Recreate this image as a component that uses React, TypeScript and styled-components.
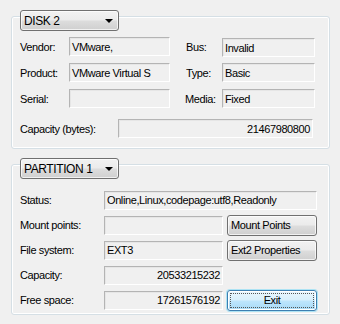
import styled, { createGlobalStyle } from 'styled-components';

const GlobalStyle = createGlobalStyle`
    html, body{
        margin : 0;
        padding : 0;
        background : #f0f0f0;
    }
    body{
        font-family : "Liberation Sans", Arial, sans-serif;
        font-size : 11px;
        letter-spacing : -0.4px;
        color : #000;
    }
`;

const Page = styled.div`
    width : 340px;
    height : 324px;
    box-sizing : border-box;
    padding : 10px 10px 0 11px;
    display : flex;
    flex-direction : column;
    gap : 9px;
`;

const Section = styled.div`
    display : flex;
    flex-direction : column;
`;

const Combo = styled.div`
    position : relative;
    z-index : 1;
    margin-left : 9px;
    width : 99px;
    height : 21px;
    box-sizing : border-box;
    border : 1px solid #707070;
    border-radius : 3px;
    background : linear-gradient(#f2f2f2 0%, #ebebeb 48%, #dddddd 52%, #cfcfcf 100%);
    box-shadow : inset 0 0 0 1px rgba(255,255,255,0.7);
    display : flex;
    align-items : center;
    justify-content : space-between;
    padding : 0 5px 0 3px;
    font-size : 12px;

    .arrow{
        width : 0;
        height : 0;
        border-left : 4px solid transparent;
        border-right : 4px solid transparent;
        border-top : 4px solid #000;
    }
`;

const Group = styled.div<{ $top: number; $bottom: number }>`
    margin-top : -15px;
    width : 319px;
    box-sizing : border-box;
    border : 1px solid #d5dfe5;
    border-radius : 3px;
    box-shadow : inset 0 0 0 1px #fff;
    padding : ${p => p.$top}px 8px ${p => p.$bottom}px 8px;
`;

const DiskGrid = styled.div`
    display : grid;
    grid-template-columns : 49px 101px 52px 93px;
    grid-template-rows : 19px 19px 19px;
    row-gap : 7px;
    align-items : center;
`;

const PartGrid = styled.div`
    display : grid;
    grid-template-columns : 80px 119px 90px;
    grid-auto-rows : 20px;
    column-gap : 4px;
    row-gap : 5px;
    align-items : center;
`;

const Label = styled.span<{ $indent?: number }>`
    padding-left : ${p => p.$indent || 0}px;
    white-space : nowrap;
`;

const Field = styled.div<{ $right?: boolean; $span?: boolean; $shift?: number }>`
    height : 19px;
    box-sizing : border-box;
    border : 1px solid #fff;
    border-top-color : #b4b4b4;
    border-left-color : #b4b4b4;
    box-shadow : inset 1px 1px 0 #e6e6e6;
    background : #f0f0f0;
    display : flex;
    align-items : center;
    justify-content : ${p => p.$right ? 'flex-end' : 'flex-start'};
    padding : 0 2px 0 2px;
    white-space : nowrap;
    overflow : hidden;
    grid-column : ${p => p.$span ? '2 / 4' : 'auto'};
    margin-top : ${p => p.$shift || 0}px;
`;

const CapacityRow = styled.div`
    display : flex;
    align-items : center;
    margin-top : 11px;

    ${Label}{
        width : 98px;
    }
    ${Field}{
        width : 195px;
    }
`;

const Button = styled.div<{ $default?: boolean }>`
    height : 21px;
    box-sizing : border-box;
    border : 1px solid ${p => p.$default ? '#3c7fb1' : '#707070'};
    border-radius : 3px;
    background : ${p => p.$default
        ? 'linear-gradient(#eaf6fd 0%, #d9f0fc 48%, #bee6fd 52%, #a7d9f5 100%)'
        : 'linear-gradient(#f2f2f2 0%, #ebebeb 48%, #dddddd 52%, #cfcfcf 100%)'};
    box-shadow : ${p => p.$default ? '0 0 0 1px #48d0fb66, inset 0 0 0 1px #fff' : 'inset 0 0 0 1px rgba(255,255,255,0.7)'};
    display : flex;
    align-items : center;
    justify-content : ${p => p.$default ? 'center' : 'flex-start'};
    padding : 0 3px;
    position : relative;

    ${p => p.$default && `
        &::after{
            content : '';
            position : absolute;
            inset : 2px;
            border : 1px dotted #555;
        }
    `}
`;

const App = () =>{
    return(
        <>
            <GlobalStyle/>
            <Page>
                <Section>
                    <Combo>DISK 2<span className="arrow"/></Combo>
                    <Group $top={20} $bottom={10}>
                        <DiskGrid>
                            <Label>Vendor:</Label>
                            <Field>VMware,</Field>
                            <Label $indent={16}>Bus:</Label>
                            <Field $shift={2}>Invalid</Field>

                            <Label>Product:</Label>
                            <Field>VMware Virtual S</Field>
                            <Label $indent={16}>Type:</Label>
                            <Field>Basic</Field>

                            <Label>Serial:</Label>
                            <Field></Field>
                            <Label $indent={15}>Media:</Label>
                            <Field>Fixed</Field>
                        </DiskGrid>
                        <CapacityRow>
                            <Label>Capacity (bytes):</Label>
                            <Field $right>21467980800</Field>
                        </CapacityRow>
                    </Group>
                </Section>

                <Section>
                    <Combo>PARTITION 1<span className="arrow"/></Combo>
                    <Group $top={25} $bottom={4}>
                        <PartGrid>
                            <Label>Status:</Label>
                            <Field $span>Online,Linux,codepage:utf8,Readonly</Field>

                            <Label>Mount points:</Label>
                            <Field></Field>
                            <Button>Mount Points</Button>

                            <Label>File system:</Label>
                            <Field>EXT3</Field>
                            <Button>Ext2 Properties</Button>

                            <Label>Capacity:</Label>
                            <Field $right>20533215232</Field>
                            <span/>

                            <Label>Free space:</Label>
                            <Field $right>17261576192</Field>
                            <Button $default>Exit</Button>
                        </PartGrid>
                    </Group>
                </Section>
            </Page>
        </>
    )
}

export default App;
